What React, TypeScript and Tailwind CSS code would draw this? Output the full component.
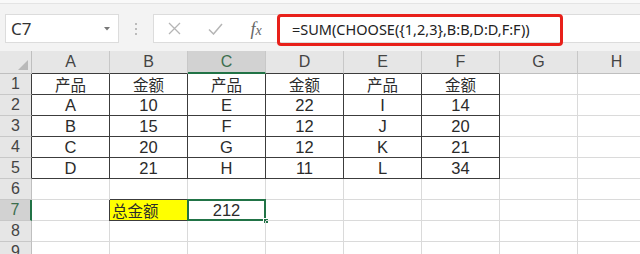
import React from "react";

const cols = ["A", "B", "C", "D", "E", "F", "G", "H"];
const data: Record<number, string[]> = {
  1: ["产品", "金额", "产品", "金额", "产品", "金额"],
  2: ["A", "10", "E", "22", "I", "14"],
  3: ["B", "15", "F", "12", "J", "20"],
  4: ["C", "20", "G", "12", "K", "21"],
  5: ["D", "21", "H", "11", "L", "34"],
};

const LIGHT = "#dadada";
const DARK = "#3c3c3c";
const LATIN = '"Liberation Sans", "Noto Sans CJK SC", sans-serif';
const CJK = '"Noto Sans CJK SC", sans-serif';

function cellBorders(r: number, c: number) {
  let right = LIGHT;
  let bottom = LIGHT;
  if (r >= 1 && r <= 5 && c >= 0 && c <= 6) right = DARK;
  if (c >= 1 && c <= 6 && r >= 0 && r <= 5) bottom = DARK;
  if (r === 7 && (c === 1 || c === 2)) right = DARK;
  if ((r === 6 || r === 7) && c === 2) bottom = DARK;
  if (r === 0 && bottom === LIGHT) bottom = "#bfbfbf";
  if (c === 0 && right === LIGHT) right = "#bfbfbf";
  return { right, bottom };
}

export default function App() {
  const rows = [0, 1, 2, 3, 4, 5, 6, 7, 8, 9];
  return (
    <div
      className="w-[640px] h-[254px] overflow-hidden bg-white relative"
      style={{ fontFamily: LATIN }}
    >
      {/* Toolbar */}
      <div className="h-[51px] bg-[#f3f3f3] border-t-[3px] border-t-[#f9f9f9] relative">
        <div className="absolute left-0 right-0 top-0 h-px bg-[#e4e4e4]" />
        <div className="flex items-start pt-[11px]">
          <div className="ml-[5px] w-[114px] h-[29px] bg-white border border-[#dcdcdc] flex items-center justify-between pl-[5px] pr-[8px]">
            <span className="text-[17px] leading-[22px] text-[#333]" style={{ fontFamily: '"Noto Sans", sans-serif' }}>C7</span>
            <svg width="6" height="4" viewBox="0 0 6 4">
              <path d="M0 0 L6 0 L3 3.5 Z" fill="#777" />
            </svg>
          </div>
          <div className="w-[34px] h-[29px] flex flex-col items-center justify-center gap-[3px]">
            <div className="w-[2px] h-[2px] bg-[#a8a8a8] rounded-full" />
            <div className="w-[2px] h-[2px] bg-[#a8a8a8] rounded-full" />
            <div className="w-[2px] h-[2px] bg-[#a8a8a8] rounded-full" />
          </div>
          <div className="flex-1 h-[29px] bg-white border-l border-y border-[#dcdcdc] flex items-center">
            <div className="w-[40px] flex justify-center">
              <svg width="13" height="13" viewBox="0 0 13 13">
                <path d="M1 1 L12 12 M12 1 L1 12" stroke="#b5b5b5" strokeWidth="1.3" />
              </svg>
            </div>
            <div className="w-[42px] flex justify-center">
              <svg width="15" height="12" viewBox="0 0 15 12">
                <path d="M1 6.5 L5.5 11 L14 1" stroke="#b5b5b5" strokeWidth="1.5" fill="none" />
              </svg>
            </div>
            <div className="w-[40px] flex justify-center">
              <span
                className="text-[18px] text-[#666] italic leading-none"
                style={{ fontFamily: '"Liberation Serif", serif' }}
              >
                f<span className="text-[14px]">x</span>
              </span>
            </div>
          </div>
        </div>
        {/* red highlight annotation */}
        <div className="absolute left-[277px] top-[11px] w-[286px] h-[32px] border-[3px] border-[#e8201a] rounded-[4px] flex items-center pl-[12px]">
          <span className="text-[14.5px] text-[#222]" style={{ fontFamily: '"Noto Sans", sans-serif' }}>
            =SUM(CHOOSE({"{"}1,2,3{"}"},B:B,D:D,F:F))
          </span>
        </div>
      </div>

      {/* Grid */}
      <div
        className="grid"
        style={{
          gridTemplateColumns: "32px repeat(8, 78px)",
          gridTemplateRows: "23px repeat(9, 21px)",
        }}
      >
        {rows.map((r) =>
          [0, 1, 2, 3, 4, 5, 6, 7, 8].map((c) => {
            const { right, bottom } = cellBorders(r, c);
            const key = `${r}-${c}`;
            if (r === 0 && c === 0) {
              return (
                <div
                  key={key}
                  className="bg-[#e6e6e6] relative"
                  style={{ borderRight: `1px solid ${right}`, borderBottom: `1px solid ${bottom}` }}
                >
                  <svg className="absolute right-[3px] bottom-[3px]" width="10" height="10" viewBox="0 0 10 10">
                    <path d="M10 0 L10 10 L0 10 Z" fill="#b9b9b9" />
                  </svg>
                </div>
              );
            }
            if (r === 0) {
              const sel = c === 3;
              return (
                <div
                  key={key}
                  className={`flex items-center justify-center text-[16px] leading-[20px] ${sel ? "bg-[#d2d2d2] text-[#3c6e4e]" : "bg-[#e6e6e6] text-[#444]"}`}
                  style={{
                    borderRight: `1px solid #c8c8c8`,
                    borderBottom: sel ? "2px solid #217346" : `1px solid ${bottom}`,
                  }}
                >
                  {cols[c - 1]}
                </div>
              );
            }
            if (c === 0) {
              const sel = r === 7;
              return (
                <div
                  key={key}
                  className={`flex items-center justify-center text-[16px] leading-[20px] ${sel ? "bg-[#d2d2d2] text-[#3c6e4e]" : "bg-[#e6e6e6] text-[#444]"}`}
                  style={{
                    borderRight: sel ? "2px solid #217346" : `1px solid ${right}`,
                    borderBottom: `1px solid #c8c8c8`,
                  }}
                >
                  {r}
                </div>
              );
            }
            let text = "";
            if (data[r] && c <= 6) text = data[r][c - 1];
            const isB7 = r === 7 && c === 2;
            const isC7 = r === 7 && c === 3;
            if (isB7) text = "总金额";
            if (isC7) text = "212";
            const isCjk = r === 1 || isB7;
            return (
              <div
                key={key}
                className={`relative flex items-center leading-[20px] text-[#2b2b2b] ${isCjk ? "text-[15.5px]" : "text-[16.5px]"} ${isB7 ? "bg-[#ffff00] justify-start pl-[2px]" : "justify-center"}`}
                style={{
                  borderRight: `1px solid ${right}`,
                  borderBottom: `1px solid ${bottom}`,
                  borderLeft: isB7 ? `1px solid ${DARK}` : undefined,
                  marginLeft: isB7 ? "-1px" : undefined,
                  fontFamily: isCjk ? CJK : LATIN,
                }}
              >
                {text}
                {isC7 && (
                  <>
                    <div className="absolute left-[-1px] top-[-1px] right-[-1px] bottom-[-1px] border-2 border-[#217346]" />
                    <div className="absolute right-[-4px] bottom-[-4px] w-[6px] h-[6px] bg-[#217346] border border-white" />
                  </>
                )}
              </div>
            );
          })
        )}
      </div>
    </div>
  );
}
